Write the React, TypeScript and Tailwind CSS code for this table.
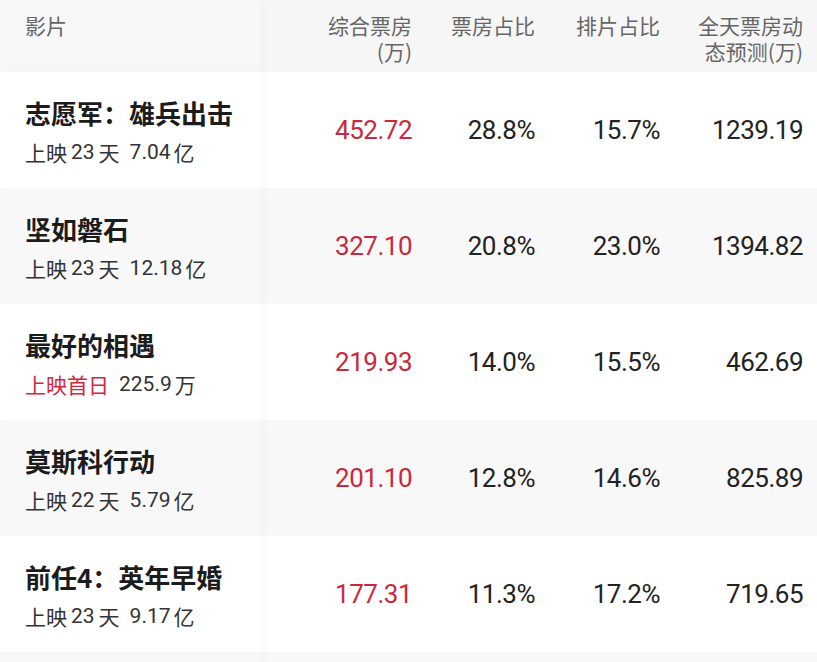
const films = [
  { name: "志愿军：雄兵出击", days: "23", total: "7.04", unit: "亿", box: "452.72", boxRate: "28.8%", showRate: "15.7%", forecast: "1239.19" },
  { name: "坚如磐石", days: "23", total: "12.18", unit: "亿", box: "327.10", boxRate: "20.8%", showRate: "23.0%", forecast: "1394.82" },
  { name: "最好的相遇", first: true, total: "225.9", unit: "万", box: "219.93", boxRate: "14.0%", showRate: "15.5%", forecast: "462.69" },
  { name: "莫斯科行动", days: "22", total: "5.79", unit: "亿", box: "201.10", boxRate: "12.8%", showRate: "14.6%", forecast: "825.89" },
  { name: "前任4：英年早婚", days: "23", total: "9.17", unit: "亿", box: "177.31", boxRate: "11.3%", showRate: "17.2%", forecast: "719.65" },
];

const cjk = { fontFamily: '"Noto Sans CJK SC", "Noto Sans", sans-serif' };
const num = { fontFamily: 'Roboto, "Noto Sans CJK SC", sans-serif' };

export default function App() {
  return (
    <div className="w-[817px] h-[662px] overflow-hidden bg-[#f8f8f8]" style={cjk}>
      <div className="flex h-[72px] bg-[#f6f6f6] text-[21px] leading-[26px] text-[#666]">
        <div className="w-[260px] shrink-0 pl-[25px] pt-[12px] bg-[#f7f7f7] shadow-[5px_0_10px_rgba(0,0,0,0.025)]">影片</div>
        <div className="w-[152px] pt-[12px] text-right">
          综合票房
          <br />
          (万)
        </div>
        <div className="w-[123px] pt-[12px] text-right">票房占比</div>
        <div className="w-[125px] pt-[12px] text-right">排片占比</div>
        <div className="w-[143px] pt-[12px] pl-[30px] text-right">全天票房动态预测(万)</div>
      </div>
      {films.map((f, i) => {
        const bg = i % 2 === 0 ? "bg-white" : "bg-[#f8f8f8]";
        return (
          <div key={f.name} className={`flex h-[116px] items-center ${bg}`}>
            <div className={`relative z-10 flex h-full w-[260px] shrink-0 flex-col justify-center pl-[25px] pt-[2px] shadow-[5px_0_10px_rgba(0,0,0,0.025)] ${bg}`}>
              <div className="text-[26px] font-bold leading-[32px] text-[#1c1c1c]">{f.name}</div>
              <div className="mt-[10px] flex items-center text-[21px] leading-[26px] text-[#333]">
                {f.first ? (
                  <span className="text-[#d0283c]">上映首日</span>
                ) : (
                  <>
                    <span>上映</span>
                    <span className="mx-[4px]" style={num}>{f.days}</span>
                    <span>天</span>
                  </>
                )}
                <span className="ml-[10px] mr-[3px]" style={num}>{f.total}</span>
                <span>{f.unit}</span>
              </div>
            </div>
            <div className="w-[152px] text-right text-[26px] tracking-[-0.5px] text-[#c9283e]" style={num}>{f.box}</div>
            <div className="w-[123px] text-right text-[26px] tracking-[-0.5px] text-[#222]" style={num}>{f.boxRate}</div>
            <div className="w-[125px] text-right text-[26px] tracking-[-0.5px] text-[#222]" style={num}>{f.showRate}</div>
            <div className="w-[143px] text-right text-[26px] tracking-[-0.5px] text-[#222]" style={num}>{f.forecast}</div>
          </div>
        );
      })}
      <div className="flex h-[20px]">
        <div className="w-[260px] bg-[#f8f8f8] shadow-[5px_0_10px_rgba(0,0,0,0.025)]" />
      </div>
    </div>
  );
}
